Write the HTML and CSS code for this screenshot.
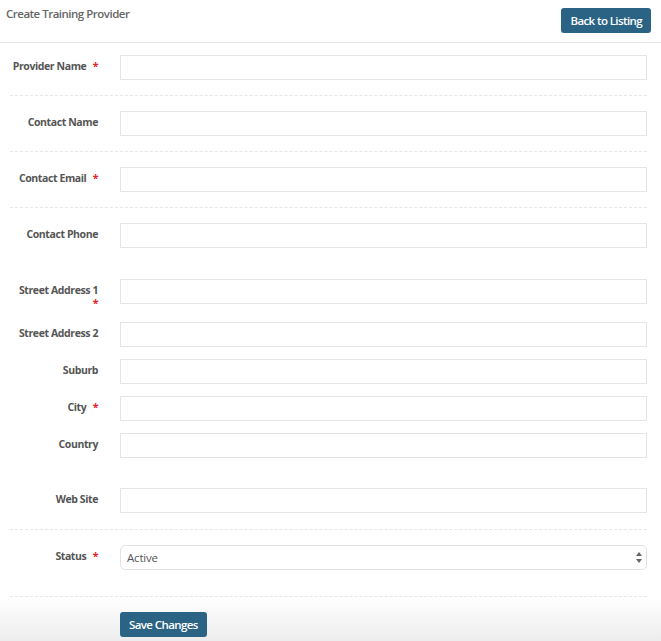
FILE: index.html
```html
<!DOCTYPE html>
<html>
<head>
<meta charset="utf-8">
<title>Create Training Provider</title>
<link rel="stylesheet" href="styles.css">
</head>
<body>
<div class="page-head">
  <div class="caption">Create Training Provider</div>
  <button class="btn">Back to Listing</button>
</div>
<form class="form">
  <div class="group first">
    <div class="field"><label class="label">Provider Name <span class="req">*</span></label><input class="input" type="text"></div>
  </div>
  <div class="group">
    <div class="field"><label class="label">Contact Name</label><input class="input" type="text"></div>
  </div>
  <div class="group">
    <div class="field"><label class="label">Contact Email <span class="req">*</span></label><input class="input" type="text"></div>
  </div>
  <div class="group plain">
    <div class="field"><label class="label">Contact Phone</label><input class="input" type="text"></div>
  </div>
  <div class="group plain address">
    <div class="field"><label class="label">Street Address 1 <span class="req">*</span></label><input class="input" type="text"></div>
    <div class="field"><label class="label">Street Address 2</label><input class="input" type="text"></div>
    <div class="field"><label class="label">Suburb</label><input class="input" type="text"></div>
    <div class="field"><label class="label">City <span class="req">*</span></label><input class="input" type="text"></div>
    <div class="field"><label class="label">Country</label><input class="input" type="text"></div>
  </div>
  <div class="group website">
    <div class="field"><label class="label">Web Site</label><input class="input" type="text"></div>
  </div>
  <div class="group last">
    <div class="field"><label class="label">Status <span class="req">*</span></label>
      <div class="select-wrap">
        <select class="select"><option>Active</option><option>Inactive</option></select>
        <svg class="arrows" width="6" height="11" viewBox="0 0 6 11"><path d="M3 0 L6 4 L0 4 Z M0 7 L6 7 L3 11 Z" fill="#666"/></svg>
      </div>
    </div>
  </div>
  <div class="actions">
    <button class="btn" type="button">Save Changes</button>
  </div>
</form>
</body>
</html>
```
FILE: styles.css
```css
html, body {
  margin: 0;
  padding: 0;
  background: #fff;
  font-family: "Open Sans", "Liberation Sans", sans-serif;
}
.page-head {
  display: flex;
  justify-content: space-between;
  align-items: flex-start;
  height: 42px;
  border-bottom: 1px solid #e5e5e5;
  padding: 0 10px 0 6px;
}
.caption {
  font-size: 11.5px;
  font-weight: 600;
  letter-spacing: -0.5px;
  color: #666;
  line-height: 16px;
  padding-top: 6px;
}
.btn {
  margin-top: 8px;
  height: 25px;
  padding: 0 9px;
  background: #2a6384;
  color: #fff;
  border: 0;
  border-radius: 3px;
  font-family: "Open Sans", "Liberation Sans", sans-serif;
  font-size: 11.5px;
  font-weight: 600;
  letter-spacing: -0.6px;
  cursor: pointer;
}
.form {
  margin: 0;
}
.group {
  margin: 0 14px 0 10px;
  padding: 15px 0 15px;
  border-bottom: 1px dashed #e6e6e6;
}
.group.first {
  padding-top: 12px;
}
.group.plain {
  border-bottom-color: transparent;
}
.group.address {
  padding-bottom: 14px;
}
.group.website {
  padding-bottom: 16px;
}
.group.last {
  padding-bottom: 26px;
}
.field {
  display: flex;
  align-items: flex-start;
}
.address .field + .field {
  margin-top: 12px;
}
.label {
  width: 110px;
  flex: none;
  box-sizing: border-box;
  padding: 5px 22px 0 2px;
  text-align: right;
  font-size: 10.5px;
  font-weight: 700;
  letter-spacing: -0.4px;
  line-height: 13px;
  color: #555;
}
.req {
  color: #e02222;
  margin-left: 4px;
}
.input {
  flex: 1;
  min-width: 0;
  height: 25px;
  box-sizing: border-box;
  border: 1px solid #e5e5e5;
  margin: 0;
  padding: 0 6px;
  font-family: inherit;
  font-size: 12px;
  color: #555;
  outline: none;
}
.select-wrap {
  flex: 1;
  position: relative;
}
.select {
  width: 100%;
  height: 25px;
  box-sizing: border-box;
  border: 1px solid #e3e3e3;
  border-radius: 5px;
  background: #fff;
  padding: 0 6px;
  font-family: inherit;
  font-size: 11.5px;
  letter-spacing: -0.2px;
  color: #555;
  appearance: none;
  -webkit-appearance: none;
  outline: none;
}
.arrows {
  position: absolute;
  right: 5px;
  top: 7px;
  pointer-events: none;
}
.actions {
  height: 60px;
  box-sizing: border-box;
  padding: 15px 0 0 120px;
  background: linear-gradient(to bottom, #ffffff, #e6e6e6);
}
.actions .btn {
  margin-top: 0;
}
```
